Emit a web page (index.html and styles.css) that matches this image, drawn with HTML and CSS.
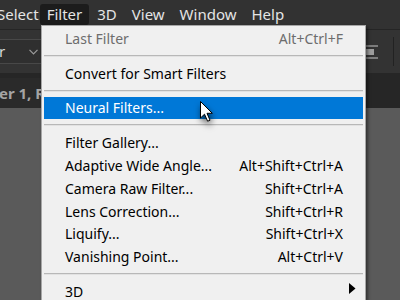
FILE: index.html
```
<!DOCTYPE html>
<html>
<head>
<meta charset="utf-8">
<link rel="stylesheet" href="styles.css">
</head>
<body>
<div class="app">
  <div class="menubar">
    <span class="mb-item mb-first">Select</span>
    <span class="mb-item mb-active">Filter</span>
    <span class="mb-item">3D</span>
    <span class="mb-item">View</span>
    <span class="mb-item">Window</span>
    <span class="mb-item">Help</span>
  </div>
  <div class="options">
    <div class="dropdown">
      <span class="dd-text">r</span>
      <svg class="dd-chev" width="9" height="6" viewBox="0 0 9 6"><path d="M0.5 0.8 L4.5 4.8 L8.5 0.8" fill="none" stroke="#9a9a9a" stroke-width="1.2"/></svg>
    </div>
    <div class="opt-spacer"></div>
    <div class="align-icon">
      <span class="al-line"></span>
      <span class="al-box"></span>
      <span class="al-line"></span>
    </div>
    <span class="vsep"></span>
  </div>
  <div class="tabbar">
    <div class="tab">Layer 1, RGB/8</div>
  </div>
  <div class="canvas"></div>
</div>

<div class="menu">
  <div class="mi disabled"><span class="lbl">Last Filter</span><span class="sc">Alt+Ctrl+F</span></div>
  <div class="sep"></div>
  <div class="mi"><span class="lbl">Convert for Smart Filters</span></div>
  <div class="sep"></div>
  <div class="mi hl"><span class="lbl">Neural Filters...</span></div>
  <div class="sep"></div>
  <div class="mi"><span class="lbl">Filter Gallery...</span></div>
  <div class="mi"><span class="lbl">Adaptive Wide Angle...</span><span class="sc">Alt+Shift+Ctrl+A</span></div>
  <div class="mi"><span class="lbl">Camera Raw Filter...</span><span class="sc">Shift+Ctrl+A</span></div>
  <div class="mi"><span class="lbl">Lens Correction...</span><span class="sc">Shift+Ctrl+R</span></div>
  <div class="mi"><span class="lbl">Liquify...</span><span class="sc">Shift+Ctrl+X</span></div>
  <div class="mi"><span class="lbl">Vanishing Point...</span><span class="sc">Alt+Ctrl+V</span></div>
  <div class="sep"></div>
  <div class="mi"><span class="lbl">3D</span><svg class="sub" width="7" height="11" viewBox="0 0 7 11"><path d="M0 0 L6.5 5.5 L0 11 Z" fill="#000"/></svg></div>
</div>

<svg class="cursor" width="16" height="24" viewBox="0 0 16 24">
  <path d="M0.5 0.5 V17 L4.5 13.2 L7.6 20.2 L10 19.2 L7 12.3 H12.3 Z" fill="#fff" stroke="#000" stroke-width="1" stroke-linejoin="miter"/>
</svg>
</body>
</html>
```
FILE: styles.css
```
html, body {
  margin: 0;
  padding: 0;
  width: 400px;
  height: 300px;
  overflow: hidden;
  background: #5a5a5a;
  font-family: "Noto Sans", "Open Sans", sans-serif;
}

.app {
  display: flex;
  flex-direction: column;
  height: 300px;
}

.menubar {
  height: 29px;
  background: #323232;
  border-bottom: 1px solid #252525;
  display: flex;
  align-items: center;
  color: #e4e4e4;
  font-size: 15px;
}

.mb-item {
  padding: 0 7px;
  height: 21px;
  line-height: 21px;
  border-radius: 3px;
  margin-right: 1px;
}

.mb-first {
  margin-left: -10px;
  margin-right: -6px;
}

.mb-active {
  background: #1c1c1c;
}

.options {
  height: 43px;
  background: #333333;
  display: flex;
  align-items: center;
}

.dropdown {
  margin-left: -12px;
  width: 39px;
  height: 23px;
  border: 1px solid #484848;
  border-radius: 4px;
  background: #2f2f2f;
  display: flex;
  align-items: center;
  justify-content: space-between;
  padding: 0 6px 0 10px;
  box-sizing: content-box;
  color: #d8d8d8;
  font-size: 15px;
}

.dd-text {
  line-height: 23px;
}

.opt-spacer {
  flex: 1;
}

.align-icon {
  width: 12px;
  display: flex;
  flex-direction: column;
  gap: 2px;
  margin-right: 15px;
}

.al-line {
  height: 2px;
  background: #7c7c7c;
}

.al-box {
  height: 6px;
  width: 8px;
  background: #9c9c9c;
}

.vsep {
  width: 1px;
  height: 29px;
  background: #222222;
  margin-right: 6px;
}

.tabbar {
  height: 35px;
  background: #262626;
  display: flex;
  align-items: flex-end;
}

.tab {
  margin-left: -37px;
  height: 30px;
  line-height: 30px;
  padding: 0 10px;
  background: #2a2a2a;
  color: #a4a4a4;
  font-weight: bold;
  font-size: 15px;
  white-space: nowrap;
}

.canvas {
  flex: 1;
  background: #5a5a5a;
}

.menu {
  position: absolute;
  left: 41px;
  top: 25px;
  width: 319px;
  height: 272px;
  overflow: hidden;
  background: #f0f0f0;
  border: 1px solid #a7a7a7;
  border-bottom: none;
  padding: 1px 2px;
  box-shadow: 2px 2px 3px rgba(0, 0, 0, 0.45);
  font-size: 14px;
  color: #000;
}

.mi {
  height: 22.8px;
  display: flex;
  align-items: center;
  justify-content: space-between;
  padding: 0 20px 0 21px;
  white-space: nowrap;
}

.mi.disabled {
  color: #6d6d6d;
}

.mi.hl {
  background: #0078d7;
  color: #ffffff;
}

.sep {
  height: 12px;
  display: flex;
  align-items: center;
}

.sep::before {
  content: "";
  flex: 1;
  height: 1px;
  background: #b8b8b8;
  border-bottom: 1px solid #e2e2e2;
}

.sub {
  margin-right: -13px;
  margin-top: -6px;
}

.cursor {
  position: absolute;
  left: 200px;
  top: 101px;
  filter: drop-shadow(1px 4px 3px rgba(0, 0, 0, 0.6));
}
```
